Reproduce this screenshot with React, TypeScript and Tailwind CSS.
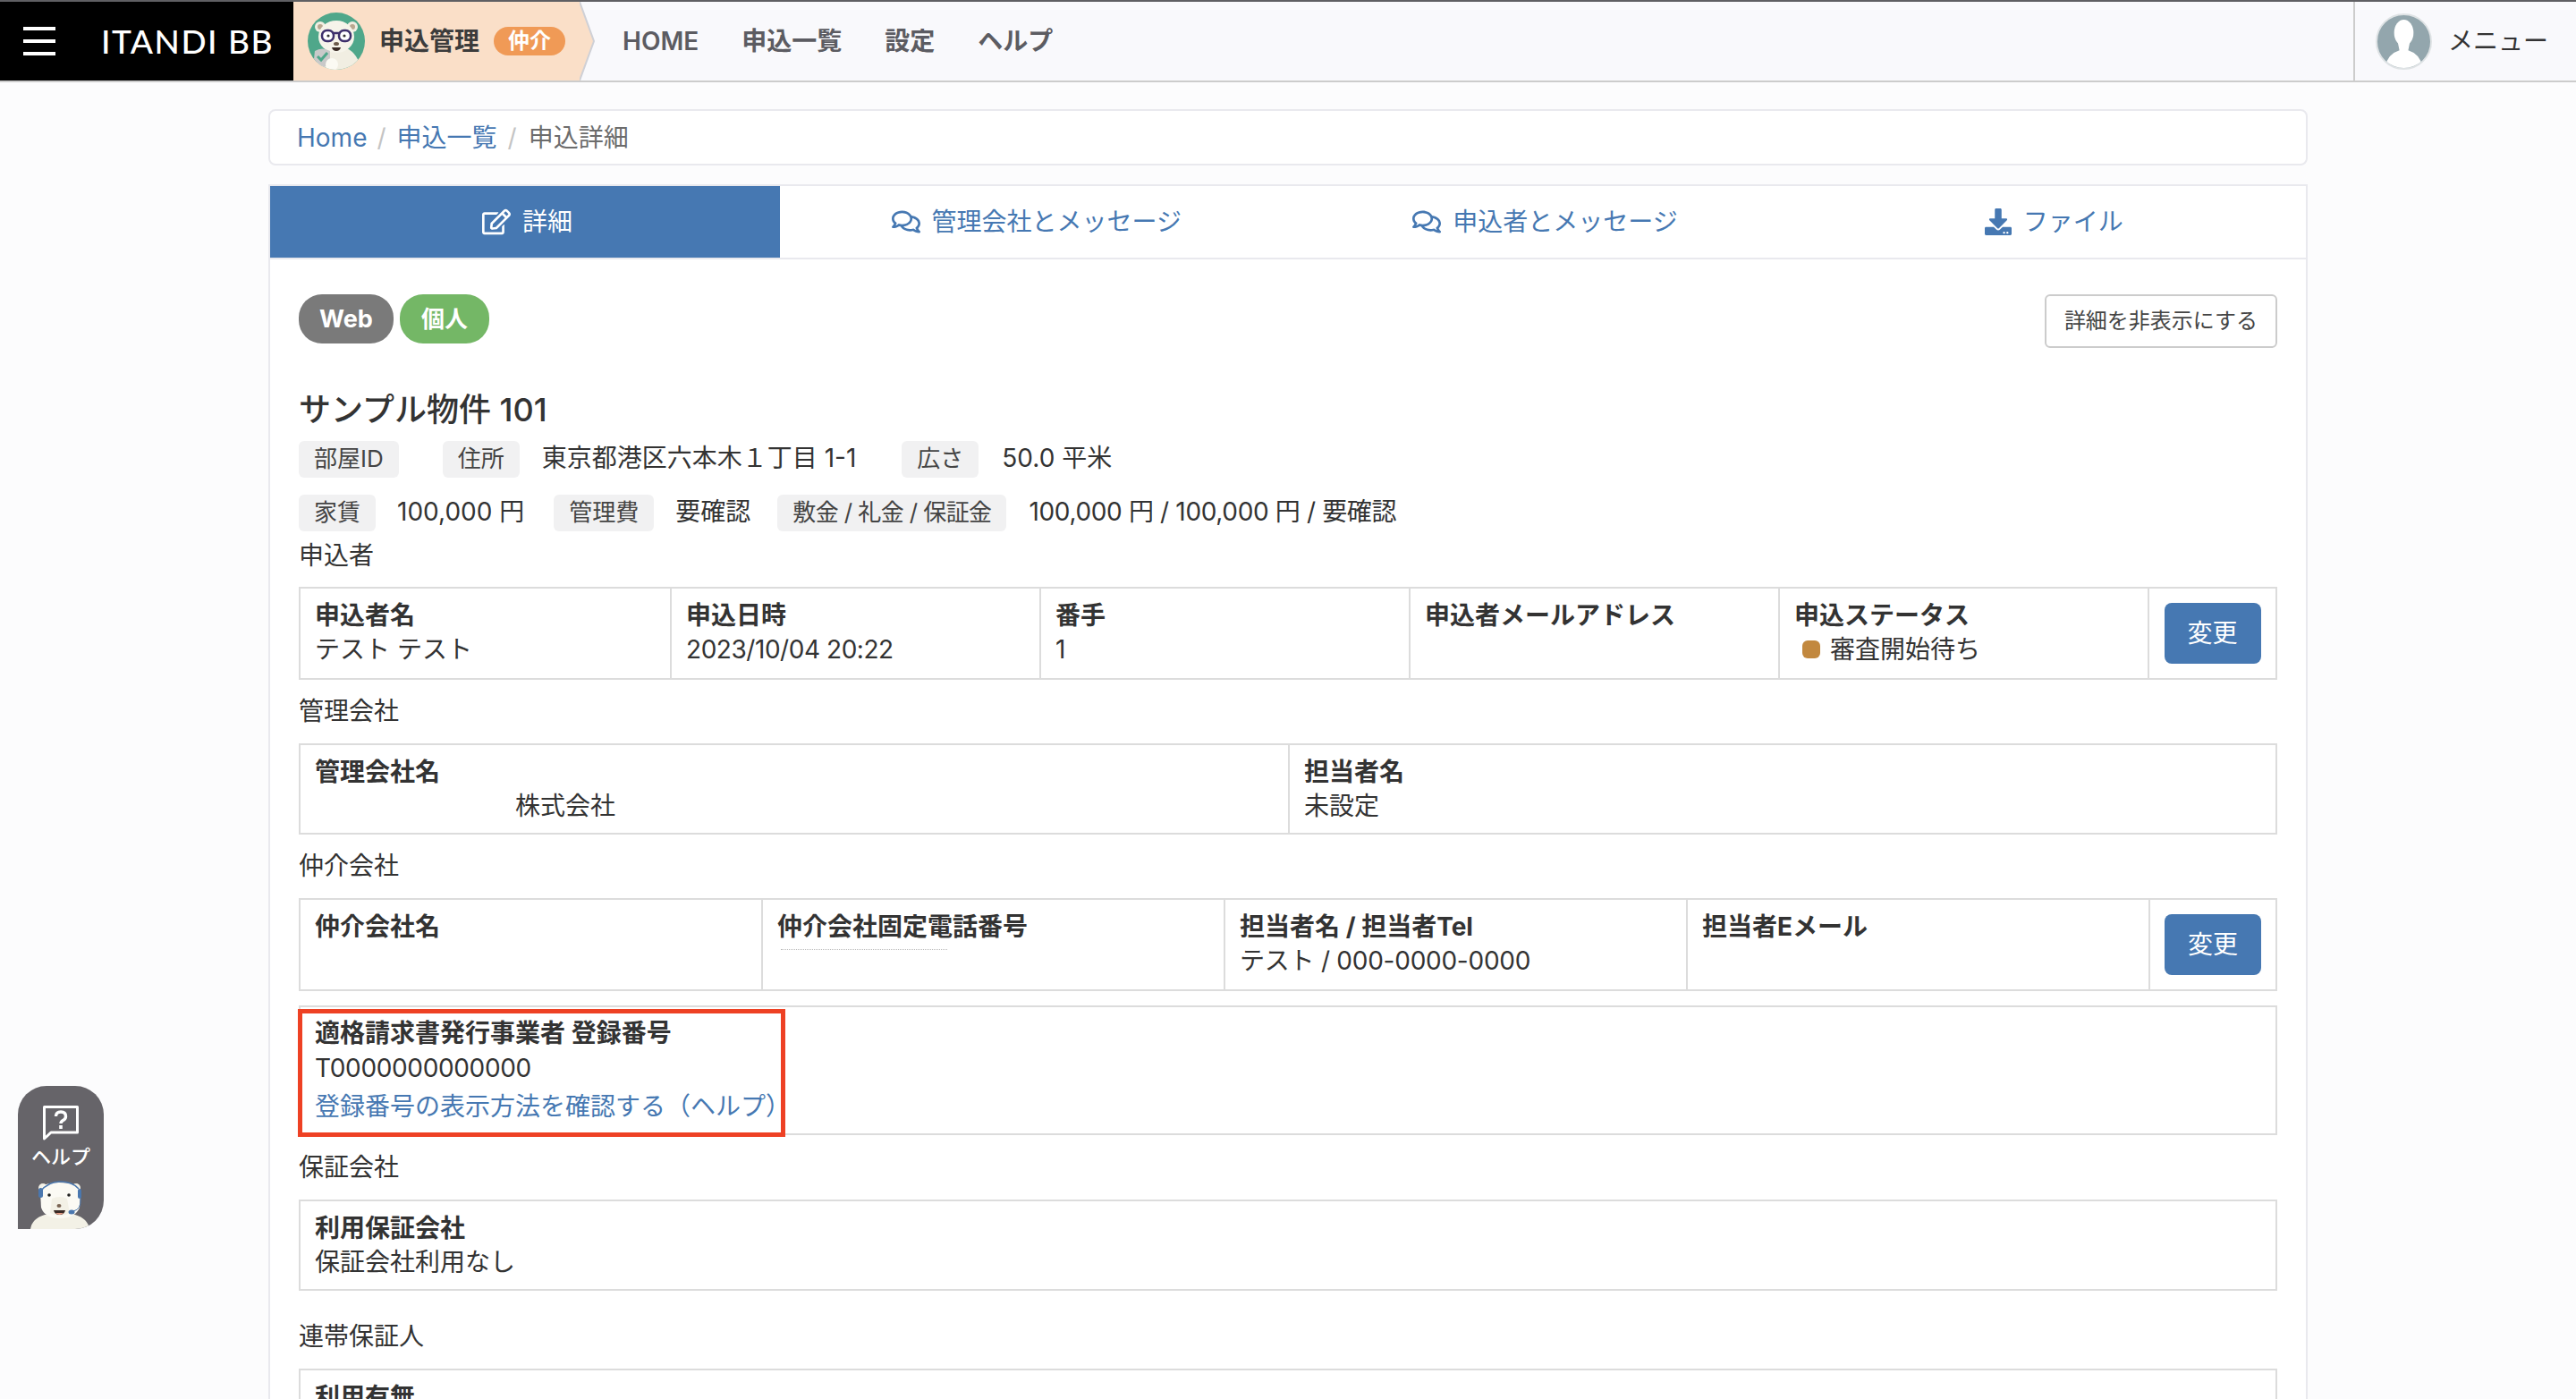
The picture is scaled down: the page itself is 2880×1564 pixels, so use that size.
import type { ReactNode } from 'react';
import { FaRegEdit, FaRegComments, FaDownload } from 'react-icons/fa';

const fontStack = 'font-["Inter","Noto_Sans_CJK_JP","Noto_Sans",sans-serif]';

// Bear with glasses + shield, header badge
function ManagerAvatar() {
    return (
        <svg viewBox="0 0 64 64" className="w-[64px] h-[64px] shrink-0">
            <defs>
                <clipPath id="mgr-clip">
                    <circle cx="32" cy="32" r="32" />
                </clipPath>
            </defs>
            <circle cx="32" cy="32" r="32" fill="#4fa78a" />
            <g clipPath="url(#mgr-clip)">
                <path d="M8 64 Q12 44 24 40 L44 40 Q56 46 60 64 Z" fill="#f1eee2" />
                <circle cx="14" cy="16" r="6" fill="#f1eee2" />
                <circle cx="50" cy="16" r="6" fill="#f1eee2" />
                <circle cx="14" cy="16" r="3" fill="#b9a78f" />
                <circle cx="50" cy="16" r="3" fill="#b9a78f" />
                <ellipse cx="32" cy="27" rx="20" ry="18" fill="#f6f4ea" />
                <rect x="16" y="20" width="13" height="12" rx="5.5" fill="#fff" stroke="#3d2f6b" strokeWidth="2.5" />
                <rect x="35" y="20" width="13" height="12" rx="5.5" fill="#fff" stroke="#3d2f6b" strokeWidth="2.5" />
                <path d="M28 23 H36" stroke="#3d2f6b" strokeWidth="2.5" />
                <circle cx="23" cy="26" r="1.6" fill="#333" />
                <circle cx="41" cy="26" r="1.6" fill="#333" />
                <ellipse cx="32" cy="35" rx="3" ry="2" fill="#6b5a4a" />
                <path d="M27 39 H37 Q36 43 32 43 Q28 43 27 39 Z" fill="#3a2b26" />
                <path d="M8 43 Q16 38 25 43 V52 Q22 60 16 63 Q9 59 7 52 Z" fill="#c9c9c9" />
                <path d="M11 49 L15 53 L22 45" fill="none" stroke="#4fa78a" strokeWidth="3" />
                <circle cx="27" cy="58" r="7" fill="#fbfaf3" />
            </g>
        </svg>
    );
}

function UserAvatar() {
    return (
        <svg viewBox="0 0 64 64" className="w-[63px] h-[63px] shrink-0">
            <defs>
                <clipPath id="user-clip">
                    <circle cx="32" cy="32" r="30" />
                </clipPath>
            </defs>
            <circle cx="32" cy="32" r="31" fill="#93a6ad" stroke="#dfe3e5" strokeWidth="2" />
            <g clipPath="url(#user-clip)">
                <ellipse cx="32" cy="22" rx="11" ry="15" fill="#fff" />
                <path d="M25 32 L27 42 Q14 46 11 60 L14 64 H50 L53 60 Q50 46 37 42 L39 32 Z" fill="#fff" />
            </g>
        </svg>
    );
}

function HelpBear() {
    return (
        <svg viewBox="0 0 66 54" className="w-[66px] h-[54px]">
            <path d="M0 54 Q2 42 16 38 L50 38 Q64 42 66 54 Z" fill="#f3f1e6" />
            <circle cx="14" cy="8" r="5" fill="#f3f1e6" />
            <circle cx="51" cy="8" r="5" fill="#f3f1e6" />
            <path d="M11 12 Q11 2 32 2 Q56 2 56 14 L55 30 Q50 42 33 42 Q16 42 12 30 Z" fill="#fbfaf4" />
            <path d="M24 20 Q33 16 41 20 L44 36 Q33 42 22 36 Z" fill="#f3f1e6" />
            <path d="M11 12 Q20 1 33 1 Q47 1 54 9" fill="none" stroke="#4a77ae" strokeWidth="1.5" />
            <rect x="9" y="8" width="5" height="11" rx="2.5" fill="#4a77ae" />
            <rect x="53" y="9" width="4" height="11" rx="2" fill="#4a77ae" />
            <path d="M56 20 Q57 32 48 34" fill="none" stroke="#4a77ae" strokeWidth="1" />
            <ellipse cx="46" cy="35" rx="3.5" ry="2.5" fill="#4a77ae" />
            <circle cx="21" cy="16" r="1.8" fill="#222" />
            <circle cx="43" cy="16" r="1.8" fill="#222" />
            <ellipse cx="32" cy="28" rx="2.5" ry="2" fill="#7a6453" />
            <path d="M26 33 H39 Q38 38 32.5 38 Q27 38 26 33 Z" fill="#3a2b26" />
            <path d="M28 36 H37 Q35 38 32.5 38 Q30 38 28 36 Z" fill="#e59c86" />
        </svg>
    );
}

function HelpIcon() {
    return (
        <svg viewBox="0 0 40 40" className="w-[40px] h-[40px]">
            <path d="M1.5 1.5 H38.5 V30 H9 L1.5 37 Z" fill="none" stroke="#fff" strokeWidth="3" strokeLinejoin="round" />
            <path d="M14.5 12 Q14.5 7 20 7 Q25.5 7 25.5 12 Q25.5 15 22.5 16.5 Q20 18 20 20" fill="none" stroke="#fff" strokeWidth="3.4" />
            <rect x="18.2" y="22" width="3.6" height="4" fill="#fff" />
        </svg>
    );
}

function SectionTitle({ children, className }: { children: ReactNode; className: string }) {
    return <h3 className={`text-[28px] leading-[39px] font-normal text-[#333] ${className}`}>{children}</h3>;
}

function Tag({ children, className = '' }: { children: ReactNode; className?: string }) {
    return (
        <span className={`block h-[41px] px-[17px] rounded-[6px] bg-[#f1f1f2] text-[26px] leading-[39px] text-[#444] whitespace-nowrap ${className}`}>
            {children}
        </span>
    );
}

function Value({ children, className = '' }: { children: ReactNode; className?: string }) {
    return <span className={`block pb-[2px] text-[28px] leading-[39px] text-[#333] whitespace-nowrap ${className}`}>{children}</span>;
}

function Field({ label, children, last }: { label: string; children?: ReactNode; last?: boolean }) {
    return (
        <div className={`pl-[16px] pt-[11px] pb-[8px] min-h-[98px] ${last ? '' : 'border-r-2 border-[#dcdcdc]'}`}>
            <div className="text-[28px] leading-[38px] font-bold text-[#333] whitespace-nowrap">{label}</div>
            <div className="text-[28px] leading-[38px] text-[#333] whitespace-nowrap">{children}</div>
        </div>
    );
}

function ChangeButton() {
    return (
        <div className="flex items-center justify-center py-[16px]">
            <button className="w-[108px] h-[68px] rounded-[8px] bg-[#4678b2] text-white text-[28px]">変更</button>
        </div>
    );
}

export default function App() {
    return (
        <div className={`w-[2880px] h-[1564px] overflow-hidden relative bg-[#fcfcfd] ${fontStack}`}>
            {/* Header */}
            <header className="h-[92px] flex border-t-2 border-b-2 border-t-[#5f5f63] border-b-[#cccccc] bg-[#f9f9fc]">
                <div className="w-[328px] bg-black flex items-center pl-[26px] shrink-0">
                    <div className="w-[36px] h-[32px] flex flex-col justify-between">
                        <div className="h-[4px] bg-white" />
                        <div className="h-[4px] bg-white" />
                        <div className="h-[4px] bg-white" />
                    </div>
                    <span className='ml-[51px] text-white text-[37px] leading-[44px] font-medium tracking-[1.5px] font-["Lato",sans-serif] whitespace-nowrap'>ITANDI BB</span>
                </div>
                <div className="relative w-[320px] bg-[#fadfc8] flex items-center pl-[16px] shrink-0">
                    <ManagerAvatar />
                    <span className="ml-[16px] text-[28px] font-bold text-[#3c3c3c] whitespace-nowrap">申込管理</span>
                    <span className="ml-[16px] w-[80px] h-[32px] rounded-full bg-[#f09a56] text-white text-[24px] leading-[32px] font-bold text-center">仲介</span>
                    {/* arrow tip of the product tab */}
                    <svg viewBox="0 0 18 88" preserveAspectRatio="none" className="absolute top-0 left-full w-[18px] h-[88px]">
                        <path d="M0 0 L16 44 L0 88 Z" fill="#fadfc8" />
                        <path d="M0 0 L16 44 L0 88" fill="none" stroke="#cfd0d6" strokeWidth="2" />
                    </svg>
                </div>
                <nav className="ml-[48px] flex items-center gap-[48px] text-[28px] font-semibold text-[#5c5c62] whitespace-nowrap">
                    <span>HOME</span>
                    <span>申込一覧</span>
                    <span>設定</span>
                    <span>ヘルプ</span>
                </nav>
                <div className="ml-auto w-[249px] border-l-2 border-[#cccccc] flex items-center pl-[23px]">
                    <UserAvatar />
                    <span className="ml-[18px] text-[28px] text-[#333] whitespace-nowrap">メニュー</span>
                </div>
            </header>

            <main className="w-[2280px] ml-[300px]">
                {/* Breadcrumb */}
                <div className="mt-[30px] h-[63px] border-2 border-[#e9e9ee] rounded-[8px] bg-white flex items-center pl-[30px] text-[28px] whitespace-nowrap">
                    <span className="text-[#4678b2]">Home</span>
                    <span className="ml-[11px] mr-[12px] text-[#c4c4c4]">/</span>
                    <span className="text-[#4678b2]">申込一覧</span>
                    <span className="ml-[12px] mr-[13px] text-[#c4c4c4]">/</span>
                    <span className="text-[#6c6c6c]">申込詳細</span>
                </div>

                {/* Card */}
                <div className="mt-[21px] border-2 border-[#e9e9ee] bg-white">
                    <div className="h-[82px] grid grid-cols-[570px_1fr_1fr_1fr] border-b-2 border-[#e9e9ee] text-[28px] text-[#4678b2]">
                        <div className="flex items-center justify-center gap-[13px] pl-[5px] bg-[#4678b2] text-white">
                            <FaRegEdit className="w-[32px] h-[32px]" />
                            <span>詳細</span>
                        </div>
                        <div className="flex items-center justify-center gap-[13px] pl-[5px]">
                            <FaRegComments className="w-[32px] h-[32px]" />
                            <span>管理会社とメッセージ</span>
                        </div>
                        <div className="flex items-center justify-center gap-[13px] pl-[5px]">
                            <FaRegComments className="w-[32px] h-[32px]" />
                            <span>申込者とメッセージ</span>
                        </div>
                        <div className="flex items-center justify-center gap-[13px] pl-[5px]">
                            <FaDownload className="w-[30px] h-[30px]" />
                            <span>ファイル</span>
                        </div>
                    </div>

                    <div className="px-[32px] pt-[39px] pb-[40px]">
                        <div className="flex justify-between items-start">
                            <div className="flex gap-[7px]">
                                <span className="w-[106px] h-[55px] rounded-[26px] bg-[#7a7a7a] text-white text-[27px] leading-[55px] font-bold text-center">Web</span>
                                <span className="w-[100px] h-[55px] rounded-[26px] bg-[#74b766] text-white text-[26px] leading-[55px] font-bold text-center">個人</span>
                            </div>
                            <button className="w-[260px] h-[60px] border-2 border-[#cccccc] rounded-[6px] bg-white text-[24px] text-[#444] whitespace-nowrap">
                                詳細を非表示にする
                            </button>
                        </div>

                        <h2 className="mt-[44px] mb-[-1px] text-[36px] leading-[50px] font-medium text-[#333]">サンプル物件 101</h2>

                        <div className="mt-[11px] h-[41px] flex items-center">
                            <Tag>部屋ID</Tag>
                            <span className="ml-[49px]"><Tag>住所</Tag></span>
                            <span className="ml-[25px]"><Value>東京都港区六本木１丁目 1-1</Value></span>
                            <span className="ml-[51px]"><Tag>広さ</Tag></span>
                            <span className="ml-[26px]"><Value>50.0 平米</Value></span>
                        </div>
                        <div className="mt-[19px] h-[41px] flex items-center">
                            <Tag>家賃</Tag>
                            <span className="ml-[24px]"><Value>100,000 円</Value></span>
                            <span className="ml-[33px]"><Tag>管理費</Tag></span>
                            <span className="ml-[24px]"><Value>要確認</Value></span>
                            <span className="ml-[30px]"><Tag className="tracking-[-0.6px]">敷金 / 礼金 / 保証金</Tag></span>
                            <span className="ml-[25px]"><Value className="tracking-[-0.35px]">100,000 円 / 100,000 円 / 要確認</Value></span>
                        </div>

                        <SectionTitle className="mt-[8px]">申込者</SectionTitle>
                        <div className="mt-[15px] border-2 border-[#dcdcdc] grid grid-cols-[415px_413px_413px_413px_413px_1fr]">
                            <Field label="申込者名">テスト テスト</Field>
                            <Field label="申込日時"><span className="tracking-[-0.45px]">2023/10/04 20:22</span></Field>
                            <Field label="番手">1</Field>
                            <Field label="申込者メールアドレス" />
                            <Field label="申込ステータス">
                                <span className="flex items-center pl-[9px] gap-[11px]">
                                    <span className="w-[20px] h-[20px] rounded-[6px] bg-[#c2883e]" />
                                    審査開始待ち
                                </span>
                            </Field>
                            <ChangeButton />
                        </div>

                        <SectionTitle className="mt-[16px]">管理会社</SectionTitle>
                        <div className="mt-[16px] border-2 border-[#dcdcdc] grid grid-cols-[1106px_1fr]">
                            <Field label="管理会社名">
                                <span className="pl-[224px]">株式会社</span>
                            </Field>
                            <Field label="担当者名" last>未設定</Field>
                        </div>

                        <SectionTitle className="mt-[16px]">仲介会社</SectionTitle>
                        <div className="mt-[16px] border-2 border-[#dcdcdc] grid grid-cols-[517px_517px_517px_517px_1fr]">
                            <Field label="仲介会社名" />
                            <Field label="仲介会社固定電話番号">
                                <div className="mt-[6px] ml-[4px] w-[186px] border-t border-dotted border-[#bbbbbb]" />
                            </Field>
                            <Field label="担当者名 / 担当者Tel"><span className="tracking-[-0.25px]">テスト / 000-0000-0000</span></Field>
                            <Field label="担当者Eメール" />
                            <ChangeButton />
                        </div>

                        {/* Invoice number, with the red annotation box on top */}
                        <div className="relative mt-[16px] h-[145px] border-2 border-[#dcdcdc] pl-[16px] pt-[10px]">
                            <div className="text-[28px] leading-[39px] font-bold text-[#333]">適格請求書発行事業者 登録番号</div>
                            <div className="text-[28px] leading-[39px] tracking-[-0.35px] text-[#333]">T0000000000000</div>
                            <div className="mt-[4px] text-[28px] leading-[39px] text-[#4678b2]">登録番号の表示方法を確認する（ヘルプ）</div>
                            <div className="absolute left-[-3px] top-[2px] w-[545px] h-[143px] border-[5px] border-[#ee4124]" />
                        </div>

                        <SectionTitle className="mt-[17px]">保証会社</SectionTitle>
                        <div className="mt-[16px] border-2 border-[#dcdcdc]">
                            <Field label="利用保証会社" last>保証会社利用なし</Field>
                        </div>

                        <SectionTitle className="mt-[32px]">連帯保証人</SectionTitle>
                        <div className="mt-[16px] border-2 border-[#dcdcdc]">
                            <Field label="利用有無" last />
                        </div>
                    </div>
                </div>
            </main>

            {/* Floating help button */}
            <div className="absolute left-[20px] top-[1214px] w-[96px] h-[160px] bg-[#666469] rounded-t-[32px] rounded-br-[32px] overflow-hidden flex flex-col items-center">
                <div className="mt-[22px] h-[40px]"><HelpIcon /></div>
                <span className="mt-[3px] text-[22px] leading-[28px] font-medium text-white whitespace-nowrap">ヘルプ</span>
                <div className="mt-[13px] ml-[-2px] h-[54px]"><HelpBear /></div>
            </div>
        </div>
    );
}
